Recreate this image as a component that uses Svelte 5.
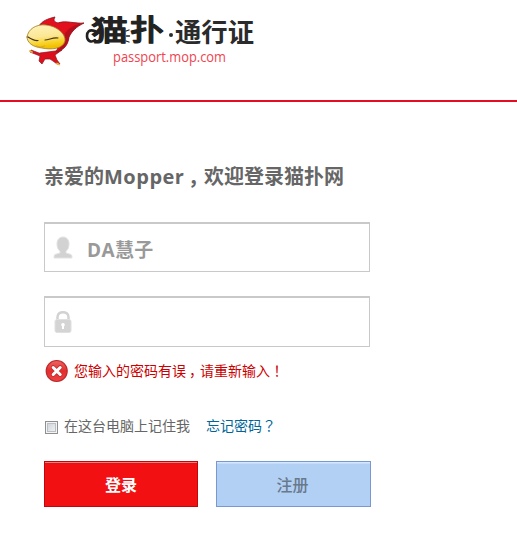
<script>
  let account = $state('DA慧子');
  let password = $state('');
  let remember = $state(false);
</script>

<div class="page">
  <header>
    <svg class="logo" width="240" height="60" viewBox="20 10 240 60" role="img" aria-label="猫扑·通行证">
      <defs>
        <linearGradient id="face" x1="0" y1="0" x2="0.2" y2="1">
          <stop offset="0" stop-color="#fff3bd" />
          <stop offset="0.55" stop-color="#fbe794" />
          <stop offset="0.8" stop-color="#f8d52c" />
          <stop offset="1" stop-color="#f1c000" />
        </linearGradient>
      </defs>
      <g stroke-linejoin="round" stroke-linecap="round">
        <path d="M39 53L31 50L30 52L40 56L39 61L42 64L45 59H50L53 61L57 64H60L57 60L55 55L62 50L55 51Z" fill="#dc101d" stroke="#8d1923" stroke-width=".7" />
        <path d="M30 51l2 1M57 63.500l2 1" stroke="#e9b33b" stroke-width="1.700" />
        <path d="M39 26C42 21 47 19 55 17C53 20 54 22 58 23C66 20 75 24 84 23C76 27 72 31 69 37C68 45 64 50 56 52C61 44 58 31 49 25Z" fill="#e3111d" stroke="#8d1923" stroke-width=".9" />
        <path d="M67 31C69 28 75 25 82 23C75 28 72 31 69 37C68 45 64 50 56 52C63 47 65 39 65 33Z" fill="#b40f1c" />
        <path d="M27 37C28 29 36 24 46 25C57 26 66 34 65 41C63 49 51 50 42 48C33 47 27 43 27 37Z" fill="url(#face)" stroke="#a47c25" stroke-width=".8" />
        <path d="M28 37C31 39 34 41 38 40.500M45 40C49 40 53 37 58 38" fill="none" stroke="#49351d" stroke-width="1.200" />
        <path d="M36 46q4 2 9 0" fill="none" stroke="#d7942a" stroke-width=".6" />
      </g>
      <g class="wordmark">
        <text x="91" y="40.500" font-size="28" textLength="37" lengthAdjust="spacingAndGlyphs">猫</text>
        <text x="130" y="41" font-size="29" textLength="34" lengthAdjust="spacingAndGlyphs">扑</text>
        <g fill="none" stroke="#222" stroke-linecap="round">
          <path d="M95 31C89 29 87 32 87 36C87 41 91 43 95 40" stroke-width="2.600" />
          <path d="M126 31l3-1M126.500 36h3M126 41l3 1" stroke-width="1.300" />
        </g>
      </g>
      <circle cx="171" cy="35" r="2" fill="#2b2b2b" />
      <text class="passport" x="175" y="41.500" textLength="79" lengthAdjust="spacingAndGlyphs">通行证</text>
      <text class="domain" x="113" y="62" textLength="113" lengthAdjust="spacingAndGlyphs">passport.mop.com</text>
    </svg>
  </header>

  <main>
    <h1>亲爱的<span class="latin">Mopper</span><span class="comma">，</span>欢迎登录猫扑网</h1>

    <label class="field">
      <svg width="22" height="24" viewBox="0 0 22 24" aria-hidden="true">
        <path d="M11 1C7 1 5 4 5 8C5 11 6 14 8 15V17L3 18.500Q2 19 2 22H20Q20 19 19 18.500L14 17V15C16 14 17 11 17 8C17 4 15 1 11 1Z" fill="#d2d2d2" stroke="#e3e3e3" />
      </svg>
      <input type="text" aria-label="账号" bind:value={account} />
    </label>

    <label class="field second">
      <svg width="22" height="24" viewBox="0 0 22 24" aria-hidden="true">
        <path d="M5.500 11V7C5.500 .5 16.500 .5 16.500 7V11" fill="none" stroke="#d2d2d2" stroke-width="2.500" />
        <rect x="3" y="9.500" width="16" height="13" rx="2" fill="#d4d4d4" stroke="#e0e0e0" />
        <path d="M11 13a1.800 1.800 0 0 1 1 3.300V19H10V16.300A1.800 1.800 0 0 1 11 13Z" fill="#fff" />
      </svg>
      <input type="password" aria-label="密码" bind:value={password} />
    </label>

    <p class="error">
      <svg width="24" height="24" viewBox="0 0 24 24" aria-hidden="true">
        <defs>
          <linearGradient id="alert" x1="0" y1="0" x2="0" y2="1">
            <stop offset="0" stop-color="#ed6761" />
            <stop offset=".5" stop-color="#e52c2d" />
            <stop offset="1" stop-color="#ed4545" />
          </linearGradient>
        </defs>
        <circle cx="11.700" cy="12" r="10.500" fill="url(#alert)" stroke="#b92b2d" stroke-width="1.200" />
        <path d="M8.200 8.500l7 7M15.200 8.500l-7 7" stroke="#b83132" stroke-width="4.500" stroke-linecap="round" />
        <path d="M8.200 8.500l7 7M15.200 8.500l-7 7" stroke="#fff" stroke-width="3" stroke-linecap="round" />
      </svg>
      <span>您输入的密码有误<span class="comma small">，</span>请重新输入<span class="mark">！</span></span>
    </p>

    <div class="options">
      <label><input type="checkbox" bind:checked={remember} /><span>在这台电脑上记住我</span></label>
      <a href="#forgot">忘记密码<span class="mark">？</span></a>
    </div>

    <div class="actions">
      <button class="login">登录</button>
      <button class="register">注册</button>
    </div>
  </main>
</div>

<style>
  :global(body) { background: #fff; overflow: hidden; }
  .page {
    width: 517px;
    height: 538px;
    font-family: "Open Sans", "Noto Sans CJK SC", sans-serif;
  }
  .page, .page * { box-sizing: border-box; }
  header {
    height: 102px;
    padding: 10px 0 0 20px;
    border-bottom: 2px solid #e60d20;
  }
  .logo { display: block; overflow: visible; }
  .wordmark text {
    font-family: "Noto Sans CJK SC", sans-serif;
    font-weight: 500;
    fill: #222;
    stroke: #222;
    stroke-width: 1.1;
    stroke-linejoin: round;
  }
  .passport {
    font: 700 26px "Noto Sans CJK SC", sans-serif;
    fill: #2b2b2b;
  }
  .domain {
    font: 14px "Open Sans", sans-serif;
    fill: #f04450;
  }
  main { padding: 61px 0 0 44px; }
  h1 {
    height: 28px;
    margin: 0;
    font-size: 20px;
    line-height: 28px;
    color: #666;
    white-space: nowrap;
    display: flex;
  }
  .latin { width: 80px; letter-spacing: .5px; }
  .comma {
    display: inline-block;
    width: 20px;
    padding-left: 4px;
    font-family: "Noto Sans CJK SC", sans-serif;
    font-feature-settings: "halt";
  }
  .comma.small { width: 14px; padding-left: 3px; line-height: 1; }
  .mark { font-family: "Noto Sans CJK JP", sans-serif; line-height: 1; }
  .field {
    display: flex;
    align-items: center;
    width: 326px;
    height: 50px;
    margin-top: 31px;
    padding: 0 7px;
    border: 1px solid #c9c9c9;
    border-top-width: 2px;
    background: #fff;
  }
  .field.second { height: 51px; margin-top: 24px; }
  .field input {
    flex: 1;
    min-width: 0;
    height: 30px;
    margin: 4px 0 0 13px;
    padding: 0;
    border: 0;
    outline: 0;
    background: transparent;
    color: #999;
    font: 700 19px/30px "Open Sans", "Noto Sans CJK SC", sans-serif;
    letter-spacing: .4px;
  }
  .error {
    display: flex;
    align-items: center;
    height: 24px;
    margin: 12px 0 0 1px;
    gap: 5px;
    color: #c00;
    font-size: 14px;
    line-height: 24px;
    white-space: nowrap;
  }
  .options {
    display: flex;
    align-items: center;
    height: 24px;
    margin-top: 31px;
    gap: 16px;
    font-size: 14px;
    line-height: 24px;
    color: #666;
    white-space: nowrap;
  }
  .options label { display: flex; align-items: center; }
  .options input {
    appearance: none;
    width: 13px;
    height: 13px;
    margin: 2px 6px 0 1px;
    border: 1px solid #8e8f8f;
    background: linear-gradient(135deg, #cbcfd5, #f6f6f6);
    box-shadow: inset 0 0 0 1px #f4f4f4, inset 0 0 0 2px #b9bfc7;
  }
  .options a { color: #069; text-decoration: none; }
  .actions { display: flex; gap: 18px; margin-top: 23px; }
  button {
    height: 46px;
    padding: 0 0 1px;
    border: 1px solid;
    font: 700 16px/24px "Noto Sans CJK SC", sans-serif;
  }
  .login {
    width: 154px;
    color: #fff;
    background: #f31012;
    border-color: #be080b;
    box-shadow: inset 0 1px #f47b7c, inset 0 2px #dc1517;
  }
  .register {
    width: 155px;
    padding-right: 2px;
    color: #68798c;
    font-weight: 500;
    background: #b2d0f4;
    border-color: #7898cf;
    box-shadow: inset 0 1px #d6e7fc, inset 0 2px #c3dcf9;
  }
</style>
